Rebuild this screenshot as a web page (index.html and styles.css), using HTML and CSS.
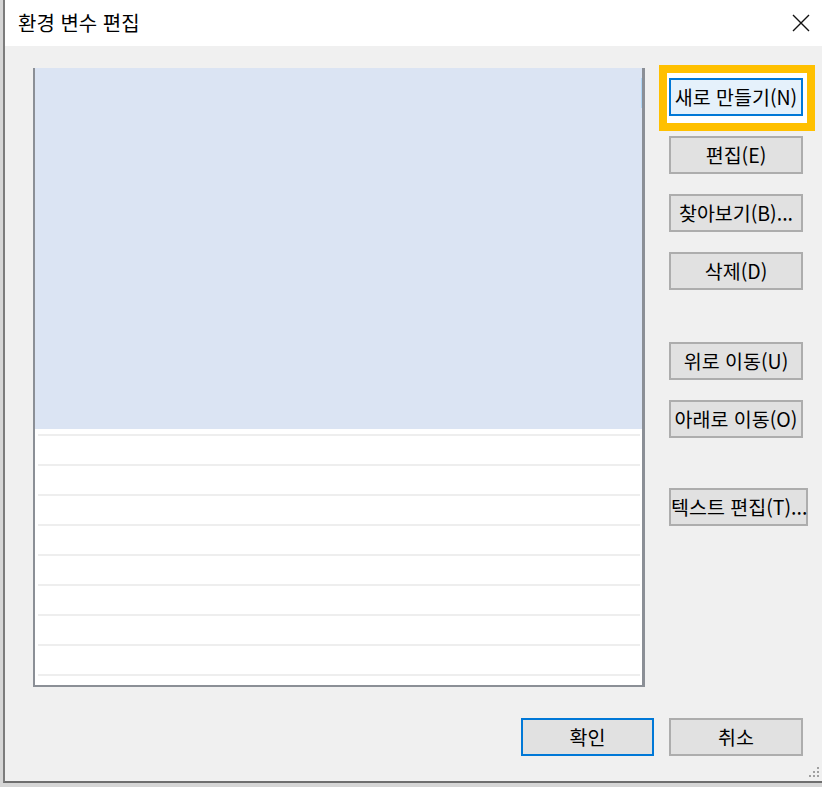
FILE: index.html
```html
<!DOCTYPE html>
<html lang="ko">
<head>
<meta charset="utf-8">
<title>환경 변수 편집</title>
<link rel="stylesheet" href="styles.css">
</head>
<body>
<div class="window">
  <div class="titlebar">
    <span class="title">환경 변수 편집</span>
    <svg class="close" width="18" height="18" viewBox="0 0 18 18"><path d="M1 1 L17 17 M17 1 L1 17" stroke="#111" stroke-width="1.4" fill="none"/></svg>
  </div>
  <div class="main">
    <div class="list">
      <div class="selected"><div class="edit"></div></div>
      <div class="spacer"></div>
      <div class="row"></div>
      <div class="row"></div>
      <div class="row"></div>
      <div class="row"></div>
      <div class="row"></div>
      <div class="row"></div>
      <div class="row"></div>
      <div class="row"></div>
      <div class="row"></div>
    </div>
    <div class="buttons">
      <div class="highlight"><button class="btn btn-focus">새로 만들기(N)</button></div>
      <button class="btn">편집(E)</button>
      <button class="btn">찾아보기(B)...</button>
      <button class="btn">삭제(D)</button>
      <button class="btn group">위로 이동(U)</button>
      <button class="btn">아래로 이동(O)</button>
      <button class="btn group2 wide">텍스트 편집(T)...</button>
    </div>
  </div>
  <div class="footer">
    <button class="btn btn-default">확인</button>
    <button class="btn">취소</button>
  </div>
  <svg class="grip" width="12" height="12" viewBox="0 0 12 12">
    <rect x="9" y="1" width="2" height="2" fill="#a0a0a0"/>
    <rect x="5" y="5" width="2" height="2" fill="#a0a0a0"/>
    <rect x="9" y="5" width="2" height="2" fill="#a0a0a0"/>
    <rect x="1" y="9" width="2" height="2" fill="#a0a0a0"/>
    <rect x="5" y="9" width="2" height="2" fill="#a0a0a0"/>
    <rect x="9" y="9" width="2" height="2" fill="#a0a0a0"/>
  </svg>
</div>
</body>
</html>
```

FILE: styles.css
```css
* { box-sizing: border-box; }
html, body {
  margin: 0;
  padding: 0;
  height: 787px;
  overflow: hidden;
  background: #d6d6d6;
  font-family: "Noto Sans CJK KR", "Noto Sans", sans-serif;
}
.window {
  position: relative;
  margin-left: 3px;
  width: 819px;
  height: 783px;
  background: #f0f0f0;
  border-left: 2px solid #7c7c7c;
  border-bottom: 2px solid #6f6f6f;
  display: flex;
  flex-direction: column;
}
.titlebar {
  height: 46px;
  background: #ffffff;
  display: flex;
  align-items: center;
  justify-content: space-between;
  padding: 0 12px 2px 13px;
}
.title {
  font-size: 20px;
  color: #000;
  letter-spacing: 0;
}
.close {
  display: block;
  margin-top: 2px;
}
.main {
  display: flex;
  padding: 22px 0 0 28px;
  height: 641px;
}
.list {
  width: 612px;
  height: 619px;
  background: #ffffff;
  border-left: 2px solid #8b8f96;
  border-right: 3px solid #8b8f96;
  border-bottom: 2px solid #8b8f96;
  overflow: hidden;
  display: flex;
  flex-direction: column;
}
.selected {
  height: 361px;
  flex: none;
  background: #dbe4f3;
  padding-top: 10px;
  margin-right: -1px;
}
.edit {
  height: 30px;
  margin-left: auto;
  width: 2px;
  background: #b0d6f5;
}
.spacer {
  height: 5px;
  flex: none;
}
.row {
  flex: none;
  height: 30px;
  border-top: 2px solid #eeeeee;
  margin: 0 2px 0 3px;
}
.buttons {
  display: flex;
  flex-direction: column;
  align-items: flex-start;
  margin-left: 24px;
  padding-top: 10px;
  gap: 20px;
}
.btn {
  width: 134px;
  height: 38px;
  background: #e1e1e1;
  border: 2px solid #adadad;
  font-family: "Noto Sans CJK KR", "Noto Sans", sans-serif;
  font-size: 19.5px;
  color: #000;
  padding: 0;
  margin: 0;
  line-height: 1;
  white-space: nowrap;
  letter-spacing: 0;
  overflow: visible;
}
.highlight {
  border: 8px solid #ffc000;
  background: #ffffff;
  padding: 5px 4px 7px 2px;
  margin: -13px -13px -15px -10px;
}
.btn-focus {
  display: block;
  background: #e5f1fb;
  border-color: #0078d7;
}
.group { margin-top: 32px; }
.group2 { margin-top: 30px; }
.wide { width: 139px; }
.footer {
  display: flex;
  justify-content: flex-end;
  gap: 15px;
  margin-top: 31px;
  padding-right: 19px;
}
.btn-default {
  width: 133px;
  border-color: #0078d7;
}
.grip {
  position: absolute;
  right: 2px;
  bottom: 3px;
}
```
